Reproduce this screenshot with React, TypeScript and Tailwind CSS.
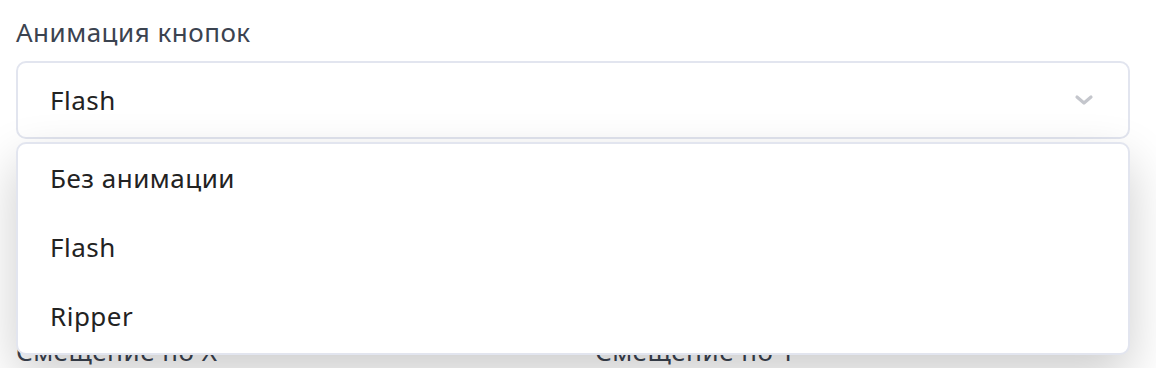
import React from 'react';

const options = ['Без анимации', 'Flash', 'Ripper'];

const Chevron = () => (
  <svg width="20" height="12" viewBox="0 0 20 12" fill="none">
    <path d="M3 3l7 6 7-6" stroke="#c4c6cc" strokeWidth="3.2" strokeLinecap="round" strokeLinejoin="round" />
  </svg>
);

export default function App() {
  return (
    <div
      className="relative w-[1156px] h-[368px] overflow-hidden bg-white px-4 pt-[14px] text-[26px] tracking-[0.5px] text-[#222]"
      style={{ fontFamily: '"Noto Sans", "Open Sans", sans-serif' }}
    >
      <div className="leading-[36px] text-[#3b4350]">Анимация кнопок</div>

      {/* select */}
      <div className="mt-[11px] flex h-[78px] w-[1114px] items-center justify-between rounded-[10px] border-2 border-[#e2e5ef] bg-white pl-[32px] pr-[34px]">
        <span>Flash</span>
        <Chevron />
      </div>

      {/* next row, hidden under the menu */}
      <div className="mt-[196px] grid w-[1114px] grid-cols-2 gap-[44px] leading-[32px] text-[#3b4350]">
        <div>Смещение по X</div>
        <div>Смещение по Y</div>
      </div>

      {/* dropdown menu */}
      <div className="absolute left-4 top-[142px] flex w-[1114px] flex-col rounded-[10px] border-2 border-[#e2e5ef] bg-white pb-[2px] shadow-[0_20px_50px_rgba(0,0,0,0.2)]">
        {options.map((o) => (
          <div key={o} className="flex h-[69px] items-center px-[32px]">
            {o}
          </div>
        ))}
      </div>
    </div>
  );
}
